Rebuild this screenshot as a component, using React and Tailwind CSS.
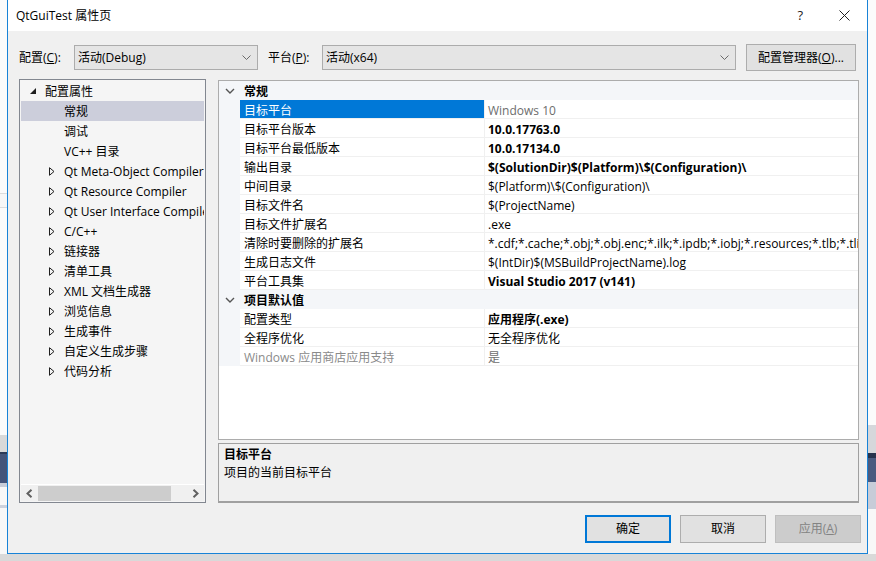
import React from 'react';

const font = "font-['Open_Sans','Noto_Sans_CJK_SC',sans-serif]";

const treeItems = [
  '调试',
  'VC++ 目录',
  'Qt Meta-Object Compiler',
  'Qt Resource Compiler',
  'Qt User Interface Compiler',
  'C/C++',
  '链接器',
  '清单工具',
  'XML 文档生成器',
  '浏览信息',
  '生成事件',
  '自定义生成步骤',
  '代码分析',
];

const general = [
  { name: '目标平台', value: 'Windows 10', selected: true, dim: true },
  { name: '目标平台版本', value: '10.0.17763.0', bold: true },
  { name: '目标平台最低版本', value: '10.0.17134.0', bold: true },
  { name: '输出目录', value: '$(SolutionDir)$(Platform)\\$(Configuration)\\', bold: true },
  { name: '中间目录', value: '$(Platform)\\$(Configuration)\\' },
  { name: '目标文件名', value: '$(ProjectName)' },
  { name: '目标文件扩展名', value: '.exe' },
  {
    name: '清除时要删除的扩展名',
    value: '*.cdf;*.cache;*.obj;*.obj.enc;*.ilk;*.ipdb;*.iobj;*.resources;*.tlb;*.tli;*.tlh;*.tmp;*.rsp',
  },
  { name: '生成日志文件', value: '$(IntDir)$(MSBuildProjectName).log' },
  { name: '平台工具集', value: 'Visual Studio 2017 (v141)', bold: true },
];

const defaults = [
  { name: '配置类型', value: '应用程序(.exe)', bold: true },
  { name: '全程序优化', value: '无全程序优化' },
  { name: 'Windows 应用商店应用支持', value: '是', dimName: true, dim: true },
];

function ComboChevron() {
  return (
    <svg width="9" height="5" viewBox="0 0 9 5" className="shrink-0">
      <path d="M0.5 0.5 L4.5 4.5 L8.5 0.5" fill="none" stroke="#6a6a6a" strokeWidth="1" />
    </svg>
  );
}

function Combo({ value, width }) {
  return (
    <div className={`flex h-[25px] items-center justify-between border border-[#acacac] bg-[#e5e5e5] pl-[3px] pr-[6px] ${width}`}>
      <span>{value}</span>
      <ComboChevron />
    </div>
  );
}

function Strip({ bands }) {
  return (
    <div className="flex h-full flex-col">
      {bands.map((b, i) => (
        <div key={i} style={{ height: b[0], background: b[1] }} />
      ))}
    </div>
  );
}

function CategoryRow({ label }) {
  return (
    <div className="flex h-[19px] items-center bg-[#f4f6f9]">
      <div className="flex w-[21px] justify-center pl-[1px]">
        <svg width="10" height="6" viewBox="0 0 10 6">
          <path d="M1 1 L5 5 L9 1" fill="none" stroke="#555" strokeWidth="1.4" />
        </svg>
      </div>
      <span className="pl-[4px] pt-[2px] font-bold">{label}</span>
    </div>
  );
}

function PropRow({ row }) {
  return (
    <div className="flex h-[19px]">
      <div className="w-[21px] shrink-0 bg-[#f4f6f9]" />
      <div
        className={`flex w-[245px] shrink-0 items-center border-b border-r border-[#f0f0f0] pl-[4px] pt-[3px] ${
          row.selected ? 'bg-[#0078d7] text-white' : row.dimName ? 'text-[#8a8a8a]' : ''
        }`}
      >
        {row.name}
      </div>
      <div
        className={`flex min-w-0 flex-1 items-center overflow-hidden whitespace-nowrap border-b border-[#f0f0f0] pl-[3px] pt-[3px] ${
          row.bold ? 'font-bold' : ''
        } ${row.dim ? 'text-[#6d6d6d]' : ''}`}
      >
        {row.value}
      </div>
    </div>
  );
}

export default function App() {
  return (
    <div className={`flex h-[561px] w-[876px] flex-col overflow-hidden bg-white text-[12px] text-black ${font}`}>
      <div className="flex h-[554px]">
        <div className="w-[7px] shrink-0">
          <Strip
            bands={[
              [193, '#fbfbfb'],
              [1, '#dcdcdc'],
              [13, '#f7f7f7'],
              [1, '#dcdcdc'],
              [227, '#fbfbfb'],
              [17, '#d9d9d9'],
              [2, '#2c3a57'],
              [29, '#44547a'],
              [4, '#c8cdd9'],
              [18, '#f8f8f8'],
              [3, '#cdd2dd'],
              [46, '#f8f8f8'],
            ]}
          />
        </div>

        <div className="flex w-[861px] shrink-0 flex-col border-x border-b border-[#1883d7] bg-[#f0f0f0]">
          {/* title bar */}
          <div className="flex h-[31px] items-center bg-white pl-[8px]">
            <span className="flex-1 text-[12px]">QtGuiTest 属性页</span>
            <span className="mr-[36px] text-[13px] text-[#222]">?</span>
            <svg width="11" height="11" viewBox="0 0 11 11" className="mr-[17px]">
              <path d="M0.5 0.5 L10.5 10.5 M10.5 0.5 L0.5 10.5" stroke="#222" strokeWidth="1" />
            </svg>
          </div>

          <div className="flex flex-1 flex-col pl-[11px]">
            {/* config row */}
            <div className="mt-[13px] flex h-[27px] items-center">
              <span className="w-[55px]">
                配置(<span className="underline">C</span>):
              </span>
              <Combo value="活动(Debug)" width="w-[184px]" />
              <span className="ml-[10px] w-[54px]">
                平台(<span className="underline">P</span>):
              </span>
              <Combo value="活动(x64)" width="w-[414px]" />
              <button
                type="button"
                className="ml-[10px] flex h-[27px] w-[110px] items-center justify-center border border-[#adadad] bg-[#e1e1e1]"
              >
                配置管理器(<span className="underline">O</span>)...
              </button>
            </div>

            {/* main area */}
            <div className="mt-[8px] flex h-[424px] gap-[12px]">
              <div className="flex w-[187px] flex-col border border-[#828790] bg-[#f5f5f5] px-[1px]">
                <div className="flex-1 overflow-hidden pt-[1px]">
                  <div className="flex h-[20px] items-center overflow-hidden whitespace-nowrap pl-[6px]">
                    <span className="flex w-[12px] shrink-0 justify-center">
                      <svg width="6" height="6" viewBox="0 0 6 6">
                        <path d="M6 0 L6 6 L0 6 Z" fill="#1e1e1e" />
                      </svg>
                    </span>
                    <span className="ml-[6px] pt-[2px]">配置属性</span>
                  </div>
                  <div className="flex h-[20px] items-center bg-[#cccedb] pl-[43px] pt-[2px]">常规</div>
                  {treeItems.map((item, i) => (
                    <div key={item} className="flex h-[20px] items-center overflow-hidden whitespace-nowrap pl-[25px]">
                      <span className="flex w-[12px] shrink-0 justify-center">
                        {i > 1 && (
                          <svg width="6" height="9" viewBox="0 0 6 9">
                            <path d="M0.5 0.7 L5 4.5 L0.5 8.3 Z" fill="none" stroke="#1e1e1e" strokeWidth="1" />
                          </svg>
                        )}
                      </span>
                      <span className="ml-[6px] shrink-0 pt-[2px]">{item}</span>
                    </div>
                  ))}
                </div>
                <div className="mb-[1px] flex h-[17px] items-center border-t border-white bg-[#f0f0f0]">
                  <span className="flex w-[17px] justify-center">
                    <svg width="7" height="9" viewBox="0 0 7 9">
                      <path d="M5.5 0.8 L1.5 4.5 L5.5 8.2" fill="none" stroke="#606060" strokeWidth="2" />
                    </svg>
                  </span>
                  <div className="h-[15px] w-[133px] bg-[#cdcdcd]" />
                  <div className="flex-1" />
                  <span className="flex w-[17px] justify-center">
                    <svg width="7" height="9" viewBox="0 0 7 9">
                      <path d="M1.5 0.8 L5.5 4.5 L1.5 8.2" fill="none" stroke="#606060" strokeWidth="2" />
                    </svg>
                  </span>
                </div>
              </div>

              <div className="flex w-[641px] flex-col">
                <div className="mt-[1px] h-[360px] overflow-hidden border border-[#acacac] bg-white">
                  <CategoryRow label="常规" />
                  {general.map((r) => (
                    <PropRow key={r.name} row={r} />
                  ))}
                  <CategoryRow label="项目默认值" />
                  {defaults.map((r) => (
                    <PropRow key={r.name} row={r} />
                  ))}
                </div>
                <div className="mt-[3px] h-[60px] border border-b-2 border-[#a0a0a0] bg-[#f0f0f0] px-[5px] pt-[2px] leading-[18px]">
                  <div className="font-bold">目标平台</div>
                  <div>项目的当前目标平台</div>
                </div>
              </div>
            </div>

            {/* buttons */}
            <div className="mt-[12px] flex h-[28px] justify-end gap-[9px] pr-[6px]">
              <button type="button" className="w-[86px] border-2 border-[#0078d7] bg-[#e1e1e1]">
                确定
              </button>
              <button type="button" className="w-[86px] border border-[#adadad] bg-[#e1e1e1]">
                取消
              </button>
              <button type="button" className="w-[86px] border border-[#bfbfbf] bg-[#cccccc] text-[#838383]">
                应用(<span className="underline">A</span>)
              </button>
            </div>
          </div>
        </div>

        <div className="w-[8px] shrink-0">
          <Strip
            bands={[
              [425, '#fbfbfb'],
              [28, '#d5d7db'],
              [5, '#26324c'],
              [24, '#4a5a7f'],
              [27, '#c7ccd8'],
              [45, '#f8f8f8'],
            ]}
          />
        </div>
      </div>
      <div className="h-[7px] bg-[#d9d9d9]" />
    </div>
  );
}
